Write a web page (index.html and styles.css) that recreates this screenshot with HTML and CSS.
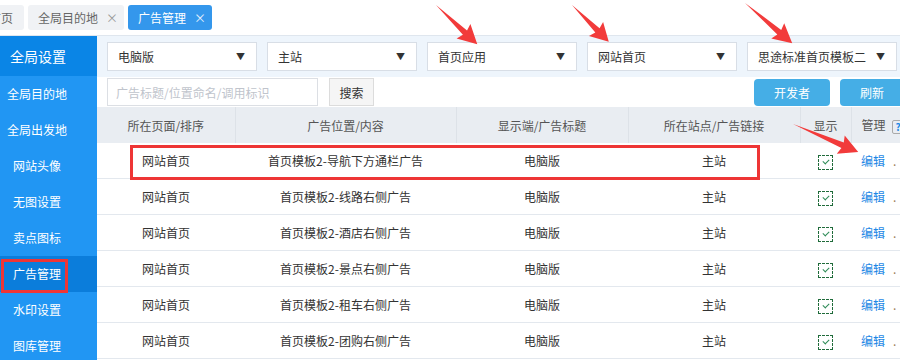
FILE: index.html
```html
<!DOCTYPE html>
<html lang="zh-CN">
<head>
    <meta charset="UTF-8">
    <title>广告管理</title>
    <link rel="stylesheet" href="styles.css">
</head>
<body>
    <div class="tabs">
        <div class="tab tab-home">首页</div>
        <div class="tab">全局目的地<span class="close">×</span></div>
        <div class="tab active">广告管理<span class="close">×</span></div>
    </div>

    <div class="main">
        <aside class="side">
            <div class="side-title">全局设置</div>
            <div class="side-item wide">全局目的地</div>
            <div class="side-item wide">全局出发地</div>
            <div class="side-item">网站头像</div>
            <div class="side-item">无图设置</div>
            <div class="side-item">卖点图标</div>
            <div class="side-item current">广告管理</div>
            <div class="side-item">水印设置</div>
            <div class="side-item">图库管理</div>
        </aside>

        <section class="content">
            <div class="filters">
                <div class="select">电脑版<span class="caret">▼</span></div>
                <div class="select">主站<span class="caret">▼</span></div>
                <div class="select">首页应用<span class="caret">▼</span></div>
                <div class="select">网站首页<span class="caret">▼</span></div>
                <div class="select">思途标准首页模板二<span class="caret">▼</span></div>
            </div>

            <div class="toolbar">
                <input class="search" type="text" placeholder="广告标题/位置命名/调用标识">
                <button class="btn-search">搜索</button>
                <button class="btn-blue dev">开发者</button>
                <button class="btn-blue refresh">刷新</button>
            </div>

            <table class="grid">
                <colgroup>
                    <col class="c1"><col class="c2"><col class="c3"><col class="c4"><col class="c5"><col class="c6">
                </colgroup>
                <thead>
                    <tr>
                        <th>所在页面/排序</th>
                        <th>广告位置/内容</th>
                        <th>显示端/广告标题</th>
                        <th>所在站点/广告链接</th>
                        <th>显示</th>
                        <th class="manage">管理<span class="help">?</span></th>
                    </tr>
                </thead>
                <tbody>
                    <tr>
                        <td>网站首页</td><td>首页模板2-导航下方通栏广告</td><td>电脑版</td><td>主站</td>
                        <td><span class="check"></span></td><td class="ops"><a>编辑</a><span class="more">.</span></td>
                    </tr>
                    <tr>
                        <td>网站首页</td><td>首页模板2-线路右侧广告</td><td>电脑版</td><td>主站</td>
                        <td><span class="check"></span></td><td class="ops"><a>编辑</a><span class="more">.</span></td>
                    </tr>
                    <tr>
                        <td>网站首页</td><td>首页模板2-酒店右侧广告</td><td>电脑版</td><td>主站</td>
                        <td><span class="check"></span></td><td class="ops"><a>编辑</a><span class="more">.</span></td>
                    </tr>
                    <tr>
                        <td>网站首页</td><td>首页模板2-景点右侧广告</td><td>电脑版</td><td>主站</td>
                        <td><span class="check"></span></td><td class="ops"><a>编辑</a><span class="more">.</span></td>
                    </tr>
                    <tr>
                        <td>网站首页</td><td>首页模板2-租车右侧广告</td><td>电脑版</td><td>主站</td>
                        <td><span class="check"></span></td><td class="ops"><a>编辑</a><span class="more">.</span></td>
                    </tr>
                    <tr>
                        <td>网站首页</td><td>首页模板2-团购右侧广告</td><td>电脑版</td><td>主站</td>
                        <td><span class="check"></span></td><td class="ops"><a>编辑</a><span class="more">.</span></td>
                    </tr>
                </tbody>
            </table>
        </section>
    </div>

    <!-- annotation marks drawn over the screenshot -->
    <div class="mark mark-side"></div>
    <div class="mark mark-row"></div>
    <svg class="arrows" width="900" height="360" viewBox="0 0 900 360">
        <g fill="#f23b3b">
            <polygon transform="translate(436 5) rotate(43.6)" points="0,0 40,-3 38,-10 57,0 38,10 40,3"/>
            <polygon transform="translate(572 5) rotate(45)" points="0,0 36,-3 34,-10 52,0 34,10 36,3"/>
            <polygon transform="translate(745 3) rotate(40.4)" points="0,0 45,-3 43,-10 62,0 43,10 45,3"/>
            <polygon transform="translate(793 124) rotate(23.3)" points="0,0 54,-3 52,-10 71,0 52,10 54,3"/>
        </g>
    </svg>
</body>
</html>
```

FILE: styles.css
```css
body {
    margin: 0;
    width: 900px;
    height: 360px;
    overflow: hidden;
    position: relative;
    font-family: "Noto Sans CJK SC", "Microsoft YaHei", sans-serif;
    font-size: 12px;
    color: #333;
    background: #fff;
}

/* top tabs */
.tabs {
    display: flex;
    gap: 4px;
    height: 36px;
    padding-top: 5px;
    box-sizing: border-box;
    border-bottom: 1px solid #dfe6ee;
}
.tab {
    height: 25px;
    line-height: 25px;
    padding: 0 6px 0 10px;
    background: #f0f2f5;
    color: #666;
    border-radius: 3px;
}
.tab-home {
    margin-left: -21px;
    padding-right: 11px;
}
.tab .close {
    margin-left: 8px;
    color: #999;
}
.tab.active {
    background: #3497ec;
    color: #fff;
}
.tab.active .close {
    color: #e8f2fc;
}

.main {
    display: flex;
    height: 324px;
}

/* sidebar */
.side {
    width: 97px;
    flex: none;
    background: #2196f3;
    color: #fff;
}
.side-title {
    height: 40px;
    line-height: 40px;
    padding-left: 10px;
    font-size: 14px;
    background: #0a85e6;
}
.side-item {
    height: 36px;
    line-height: 36px;
    padding-left: 13px;
}
.side-item.wide {
    padding-left: 7px;
}
.side-item.current {
    background: #0b7ddb;
}

/* content */
.content {
    flex: 1;
    min-width: 0;
    overflow: hidden;
}
.filters {
    display: flex;
    gap: 10px;
    height: 41px;
    padding: 6px 0 0 10px;
    box-sizing: border-box;
    background: #eef5fc;
}
.select {
    width: 150px;
    height: 29px;
    line-height: 27px;
    flex: none;
    box-sizing: border-box;
    padding: 0 10px;
    background: #fff;
    border: 1px solid #d8dee6;
    color: #333;
    position: relative;
}
.caret {
    position: absolute;
    right: 11px;
    top: 0;
    font-size: 9px;
    color: #333;
}

.toolbar {
    display: flex;
    align-items: center;
    height: 30px;
    padding-left: 10px;
}
.search {
    width: 211px;
    height: 28px;
    box-sizing: border-box;
    border: 1px solid #dcdfe4;
    padding: 0 8px;
    font: inherit;
    color: #333;
}
.search::placeholder {
    color: #c0c4cc;
}
.btn-search {
    margin-left: 11px;
    width: 45px;
    height: 28px;
    border: 1px solid #dcdcdc;
    background: #f5f5f5;
    font: inherit;
    color: #333;
    padding: 0;
}
.btn-blue {
    height: 27px;
    border: none;
    border-radius: 4px;
    background: #45aee6;
    color: #fff;
    font: inherit;
    padding: 0;
}
.dev {
    width: 76px;
    margin-left: auto;
}
.refresh {
    width: 64px;
    margin-left: 10px;
    margin-right: -4px;
    flex: none;
}

/* table */
.grid {
    border-collapse: collapse;
    table-layout: fixed;
    width: 860px;
}
.c1 { width: 138px; }
.c2 { width: 221px; }
.c3 { width: 172px; }
.c4 { width: 172px; }
.c5 { width: 51px; }
.c6 { width: 106px; }
.grid th {
    height: 36px;
    padding: 0;
    background: #e9edf2;
    color: #555;
    font-weight: normal;
    border-left: 1px solid #dde2e8;
}
.grid th:first-child {
    border-left: none;
}
.grid th.manage {
    text-align: left;
    padding-left: 10px;
}
.help {
    display: inline-block;
    width: 11px;
    height: 12px;
    line-height: 12px;
    margin-left: 6px;
    border: 1px solid #aaa;
    border-radius: 2px;
    color: #1e88e5;
    font-size: 10px;
    font-weight: bold;
    text-align: center;
    vertical-align: middle;
}
.grid td {
    height: 35px;
    padding: 0;
    text-align: center;
    border-bottom: 1px solid #e3e8ee;
}
.check {
    display: inline-block;
    width: 13px;
    height: 13px;
    border: 1px dashed #1f6b3a;
    position: relative;
    vertical-align: middle;
}
.check::after {
    content: "";
    position: absolute;
    left: 4px;
    top: 3px;
    width: 5px;
    height: 3px;
    border-left: 1.5px solid #2e8b57;
    border-bottom: 1.5px solid #2e8b57;
    transform: rotate(-45deg);
}
.grid td.ops {
    text-align: left;
    padding-left: 10px;
}
.ops a {
    color: #1e88e5;
}
.more {
    margin-left: 8px;
    color: #a0805a;
}

/* annotation marks */
.mark {
    position: absolute;
    border: 3px solid #ee3535;
    box-sizing: border-box;
}
.mark-side {
    left: 1px;
    top: 259px;
    width: 67px;
    height: 34px;
}
.mark-row {
    left: 130px;
    top: 145px;
    width: 630px;
    height: 35px;
}
.arrows {
    position: absolute;
    left: 0;
    top: 0;
    pointer-events: none;
}
```
